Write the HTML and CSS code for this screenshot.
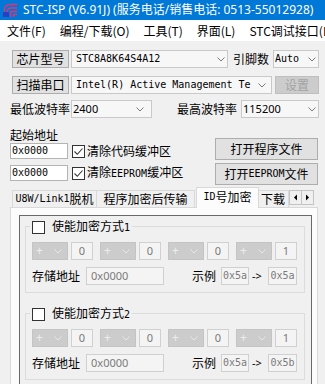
FILE: index.html
```html
<!DOCTYPE html>
<html>
<head>
<meta charset="utf-8">
<link rel="stylesheet" href="styles.css">
</head>
<body>
<div class="titlebar">
  <svg class="logo" viewBox="0 0 14 14">
    <path d="M1.5 14V6.5A5 5 0 0 1 6.5 1.5H14" fill="none" stroke="#e8326e" stroke-width="1.3"/>
    <path d="M4.5 14V8A3 3 0 0 1 7.5 5H14" fill="none" stroke="#e8326e" stroke-width="1.3"/>
    <path d="M7.5 14V10A1.5 1.5 0 0 1 9 8.5H14" fill="none" stroke="#e8326e" stroke-width="1.3"/>
    <path d="M10.5 14V11.5H14" fill="none" stroke="#e8326e" stroke-width="1.3"/>
    <rect x="0" y="9" width="6" height="5" fill="#2b3fc4"/>
  </svg>
  <span class="title">STC-ISP (V6.91J) (服务电话/销售电话: 0513-55012928)</span>
</div>
<div class="menubar">
  <span class="menu">文件(F)</span>
  <span class="menu">编程/下载(O)</span>
  <span class="menu">工具(T)</span>
  <span class="menu">界面(L)</span>
  <span class="menu">STC调试接口(D)</span>
</div>
<div class="main">
  <div class="row r1">
    <button class="btn b-chip">芯片型号</button>
    <div class="combo c-chip"><span class="ctext mono">STC8A8K64S4A12</span><svg class="chev" viewBox="0 0 8 5"><path d="M0.5 0.5L4 4L7.5 0.5" fill="none" stroke="#7a7a7a"/></svg></div>
    <span class="lbl l-pins">引脚数</span>
    <div class="combo c-pins"><span class="ctext mono">Auto</span><svg class="chev" viewBox="0 0 8 5"><path d="M0.5 0.5L4 4L7.5 0.5" fill="none" stroke="#7a7a7a"/></svg></div>
  </div>
  <div class="row r2">
    <button class="btn b-chip">扫描串口</button>
    <div class="combo c-port"><span class="ctext mono">Intel(R) Active Management Te</span><svg class="chev" viewBox="0 0 8 5"><path d="M0.5 0.5L4 4L7.5 0.5" fill="none" stroke="#7a7a7a"/></svg></div>
    <button class="btn b-set" disabled>设置</button>
  </div>
  <div class="row r3">
    <span class="lbl l-baud">最低波特率</span>
    <div class="combo c-lo"><span class="ctext sans">2400</span><svg class="chev" viewBox="0 0 8 5"><path d="M0.5 0.5L4 4L7.5 0.5" fill="none" stroke="#7a7a7a"/></svg></div>
    <span class="lbl l-hi">最高波特率</span>
    <div class="combo c-hi"><span class="ctext sans">115200</span><svg class="chev" viewBox="0 0 8 5"><path d="M0.5 0.5L4 4L7.5 0.5" fill="none" stroke="#7a7a7a"/></svg></div>
  </div>
  <div class="addr">
    <div class="addr-left">
      <div class="lbl l-start">起始地址</div>
      <div class="row r5">
        <div class="input mono">0x0000</div>
        <span class="check"><svg viewBox="0 0 11 11"><path d="M1.5 5.5L4.3 8.3L9.5 2.5" fill="none" stroke="#333" stroke-width="1.1"/></svg></span>
        <span class="lbl cl">清除代码缓冲区</span>
      </div>
      <div class="row r6">
        <div class="input mono">0x0000</div>
        <span class="check"><svg viewBox="0 0 11 11"><path d="M1.5 5.5L4.3 8.3L9.5 2.5" fill="none" stroke="#333" stroke-width="1.1"/></svg></span>
        <span class="lbl cl">清除<span class="mono">EEPROM</span>缓冲区</span>
      </div>
    </div>
    <div class="addr-right">
      <button class="btn b-open">打开程序文件</button>
      <button class="btn b-open">打开<span class="mono">EEPROM</span>文件</button>
    </div>
  </div>
  <div class="tabs">
    <div class="tab t1"><span class="mono">U8W/Link1</span>脱机</div>
    <div class="tab t2">程序加密后传输</div>
    <div class="tab t3"><span class="mono">ID</span>号加密</div>
    <div class="tab t4">下载</div>
    <div class="scroll">
      <div class="sbtn"><svg viewBox="0 0 11 13"><path d="M7 3.5L4 6.5L7 9.5Z" fill="#000"/></svg></div>
      <div class="sbtn"><svg viewBox="0 0 11 13"><path d="M4 3.5L7 6.5L4 9.5Z" fill="#000"/></svg></div>
    </div>
  </div>
  <div class="panel">
    <div class="frame">
      <div class="group">
        <div class="gtitle"><span class="check empty"></span><span class="gt">使能加密方式<span class="mono">1</span></span></div>
        <div class="spins">
          <div class="scombo"><span>+</span><svg class="chev" viewBox="0 0 8 5"><path d="M0.5 0.5L4 4L7.5 0.5" fill="none" stroke="#e8e8e8"/></svg></div><div class="sinput">0</div>
          <div class="scombo"><span>+</span><svg class="chev" viewBox="0 0 8 5"><path d="M0.5 0.5L4 4L7.5 0.5" fill="none" stroke="#e8e8e8"/></svg></div><div class="sinput">0</div>
          <div class="scombo"><span>+</span><svg class="chev" viewBox="0 0 8 5"><path d="M0.5 0.5L4 4L7.5 0.5" fill="none" stroke="#e8e8e8"/></svg></div><div class="sinput">0</div>
          <div class="scombo"><span>+</span><svg class="chev" viewBox="0 0 8 5"><path d="M0.5 0.5L4 4L7.5 0.5" fill="none" stroke="#e8e8e8"/></svg></div><div class="sinput">1</div>
        </div>
        <div class="arow">
          <span class="lbl">存储地址</span>
          <div class="ainput">0x0000</div>
          <span class="lbl ex">示例</span>
          <div class="xbox mono">0x5a</div>
          <span class="arr">-&gt;</span>
          <div class="xbox mono">0x5a</div>
        </div>
      </div>
      <div class="group">
        <div class="gtitle"><span class="check empty"></span><span class="gt">使能加密方式<span class="mono">2</span></span></div>
        <div class="spins">
          <div class="scombo"><span>+</span><svg class="chev" viewBox="0 0 8 5"><path d="M0.5 0.5L4 4L7.5 0.5" fill="none" stroke="#e8e8e8"/></svg></div><div class="sinput">0</div>
          <div class="scombo"><span>+</span><svg class="chev" viewBox="0 0 8 5"><path d="M0.5 0.5L4 4L7.5 0.5" fill="none" stroke="#e8e8e8"/></svg></div><div class="sinput">0</div>
          <div class="scombo"><span>+</span><svg class="chev" viewBox="0 0 8 5"><path d="M0.5 0.5L4 4L7.5 0.5" fill="none" stroke="#e8e8e8"/></svg></div><div class="sinput">0</div>
          <div class="scombo"><span>+</span><svg class="chev" viewBox="0 0 8 5"><path d="M0.5 0.5L4 4L7.5 0.5" fill="none" stroke="#e8e8e8"/></svg></div><div class="sinput">1</div>
        </div>
        <div class="arow">
          <span class="lbl">存储地址</span>
          <div class="ainput">0x0000</div>
          <span class="lbl ex">示例</span>
          <div class="xbox mono">0x5a</div>
          <span class="arr">-&gt;</span>
          <div class="xbox mono">0x5b</div>
        </div>
      </div>
    </div>
  </div>
</div>
</body>
</html>
```

FILE: styles.css
```css
* { box-sizing: border-box; margin: 0; padding: 0; }
html, body { width: 325px; height: 384px; overflow: hidden; }
body {
  background: #f0f0f0;
  font-family: "Noto Sans CJK SC", "Noto Sans", sans-serif;
  font-size: 12px;
  line-height: 14px;
  color: #000;
}
.mono { font-family: "DejaVu Sans Mono", "Liberation Mono", monospace; font-size: 10px; }
.sans { font-family: "Noto Sans", "Liberation Sans", sans-serif; font-size: 11px; }

.titlebar {
  height: 20px; background: #0078d7; color: #fff;
  display: flex; align-items: center; padding-left: 3px;
  white-space: nowrap; overflow: hidden;
}
.logo { width: 14px; height: 14px; flex: none; }
.title { margin-left: 6px; font-family: "Noto Sans", "Noto Sans CJK SC", sans-serif; font-size: 12px; }

.menubar {
  height: 21px; background: #fff; display: flex; align-items: center;
  white-space: nowrap; overflow: hidden;
}
.menu { padding: 0 7px; flex: none; }

.main { padding: 9px 6px 0 10px; }
.row { display: flex; align-items: center; height: 18px; }
.r2 { margin-top: 8px; }
.r3 { margin-top: 6px; }

.btn {
  font: inherit; color: #000; background: #e1e1e1; border: 1px solid #adadad;
  height: 18px; display: flex; align-items: center; justify-content: center; flex: none;
}
.b-chip { width: 57px; margin-left: 2px; }
.b-set { width: 44px; margin-left: 3px; background: #cccccc; border-color: #bfbfbf; color: #a3a3a3; }

.combo {
  height: 18px; background: #f7f7f7; border: 1px solid #c9c9c9;
  display: flex; align-items: center; padding: 0 0 0 4px; flex: none; overflow: hidden;
}
.ctext { flex: 1; white-space: nowrap; overflow: hidden; }
.chev { width: 8px; height: 5px; flex: none; margin: 0 2px 0 4px; }
.c-chip { width: 157px; margin-left: 2px; }
.lbl { white-space: nowrap; flex: none; }
.l-pins { margin-left: 5px; width: 36px; }
.c-pins { width: 46px; margin-left: 4px; padding-left: 1px; }
.c-port { width: 201px; margin-left: 2px; }
.c-port .chev { margin-right: 5px; }
.l-baud { width: 61px; }
.c-lo { width: 81px; padding-left: 1px; }
.c-lo .chev { margin-right: 7px; }
.l-hi { margin-left: auto; }
.c-hi { width: 78px; margin-left: 4px; padding-left: 1px; }

.addr { display: flex; margin-top: 10px; }
.addr-left { flex: none; }
.l-start { height: 14px; }
.r5 { height: 16px; margin-top: 1px; }
.r6 { height: 16px; margin-top: 6px; }
.input {
  width: 58px; height: 16px; background: #fff; border: 1px solid #b4b4b4;
  display: flex; align-items: center; padding-left: 1px; flex: none;
}
.check {
  width: 13px; height: 13px; border: 1px solid #333; background: #fff;
  margin-left: 4px; flex: none; display: flex;
}
.check svg { width: 11px; height: 11px; }
.cl { margin-left: 2px; }
.addr-right { margin-left: auto; margin-top: 10px; margin-right: 1px; display: flex; flex-direction: column; gap: 3px; }
.b-open { width: 103px; height: 22px; }

.tabs {
  display: flex; align-items: flex-end; height: 20px; margin: 2px 0 0 2px; width: 306px;
  position: relative; z-index: 1; white-space: nowrap;
}
.tab {
  height: 17px; border: 1px solid #d9d9d9; border-bottom: none; background: #f0f0f0;
  display: flex; align-items: center; justify-content: center; overflow: hidden; flex: none;
}
.t1 { width: 85px; }
.t2 { width: 99px; margin-left: -1px; }
.t3 { width: 63px; height: 21px; margin: 0 0 -1px 1px; background: #fcfcfc; padding-bottom: 2px; }
.t4 { width: 31px; justify-content: flex-start; padding-left: 2px; margin-left: -1px; }
.scroll { display: flex; align-self: flex-start; margin-top: 3px; }
.sbtn { width: 13px; height: 15px; border: 1px solid #c4c4c4; background: #f0f0f0; display: flex; align-items: center; justify-content: center; }
.sbtn + .sbtn { margin-left: -1px; }
.sbtn svg { width: 11px; height: 13px; }

.panel {
  width: 308px; height: 190px; background: #fcfcfc;
  border: 1px solid #d9d9d9; padding: 7px 5px 0 8px;
}
.frame {
  height: 175px; background: #f0f0f0; border: 1px solid #696969;
  padding: 0 6px 0 5px;
}
.group { border: 1px solid #dcdcdc; margin-top: 10px; padding: 0 0 7px 6px; }
.group + .group { margin-top: 20px; }
.gtitle {
  display: flex; align-items: center; height: 14px; margin: -7px 0 0 -2px;
  padding: 0 2px; background: #f0f0f0; width: max-content;
}
.gtitle .check { margin-left: 0; }
.gt { margin-left: 7px; }
.spins { display: flex; height: 18px; margin-top: 8px; }
.scombo {
  width: 36px; height: 18px; background: #cccccc; border: 1px solid #c4c4c4;
  display: flex; align-items: center; justify-content: space-between; padding: 0 5px 0 3px;
  color: #ededed; font-family: "Noto Sans", sans-serif; font-size: 12px; flex: none;
}
.scombo .chev { margin: 0; }
.sinput {
  width: 22px; height: 18px; margin-left: 3px; background: #f4f4f4; border: 1px solid #d0d0d0;
  display: flex; align-items: center; justify-content: center; flex: none;
  color: #7a7a7a; font-family: "Noto Sans", sans-serif; font-size: 11px;
}
.sinput + .scombo { margin-left: 7px; }
.arow { display: flex; align-items: center; height: 18px; margin-top: 7px; }
.ainput {
  width: 78px; height: 18px; margin-left: 6px; background: #f4f4f4; border: 1px solid #d0d0d0;
  display: flex; align-items: center; padding-left: 4px; flex: none;
  color: #7a7a7a; font-family: "Noto Sans", sans-serif; font-size: 11px;
}
.ex { margin-left: 28px; }
.xbox {
  width: 28px; height: 18px; margin-left: 5px; background: #f4f4f4; border: 1px solid #d0d0d0;
  display: flex; align-items: center; justify-content: center; flex: none; color: #7a7a7a;
}
.arr { margin-left: 3px; width: 13px; font-family: "Noto Sans", sans-serif; font-size: 11px; flex: none; }
.arr + .xbox { margin-left: 3px; width: 29px; }
```
